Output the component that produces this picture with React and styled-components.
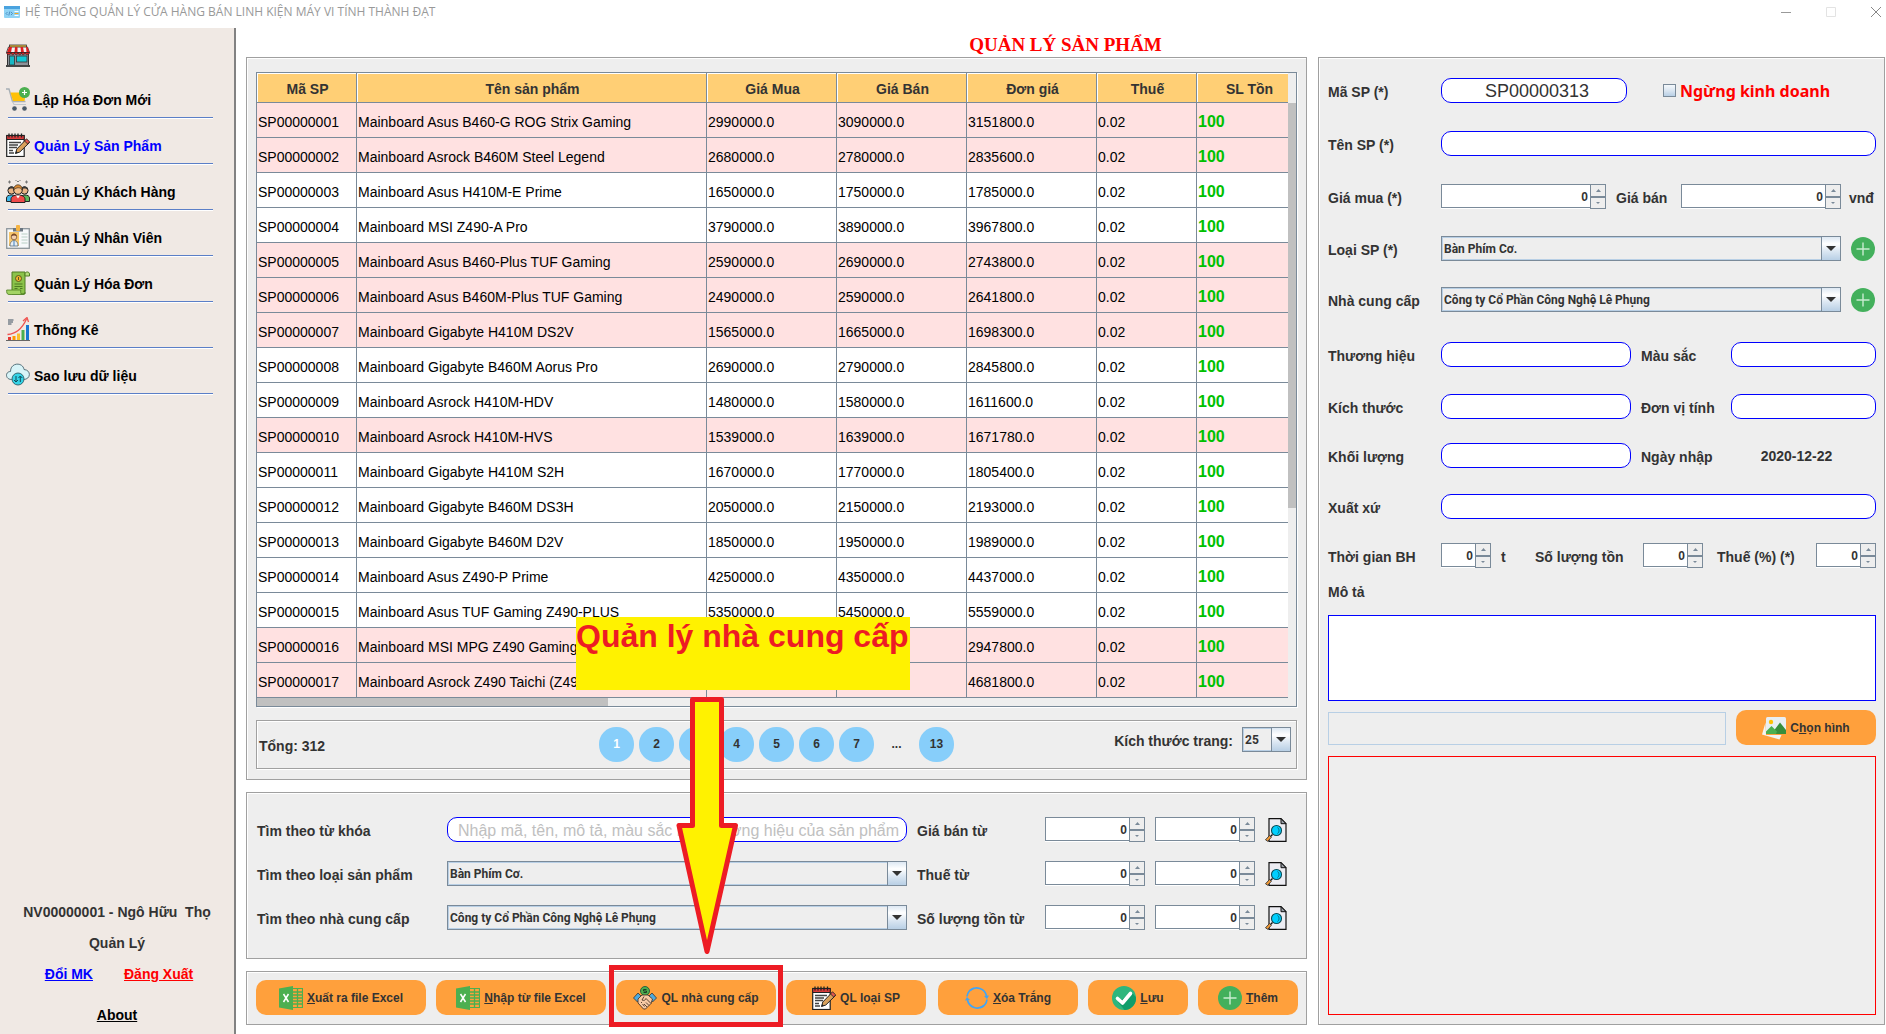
import React from "react";
import styled, { createGlobalStyle, css } from "styled-components";

const sans = '"Liberation Sans", Arial, sans-serif';
const ink = "#333333";
const steel = "#7a8a99";
const frost = "#b8cfe5";
const surface = "#eeeeee";

const GlobalStyle = createGlobalStyle`
  *, *::before, *::after { box-sizing: border-box; }
  body { margin: 0; background: #fff; color: ${ink}; font: 14px/18px ${sans}; }
  button, input, select, textarea { font: inherit; color: inherit; margin: 0; }
  button { cursor: pointer; }
`;

/* ---------- window ---------- */

const Window = styled.div`
  display: flex;
  flex-direction: column;
  min-height: 100vh;
`;

const TitleBar = styled.header`
  display: flex;
  align-items: center;
  gap: 5px;
  height: 28px;
  padding: 0 2px 4px 4px;
  color: #999;
  font: 12px/16px "Open Sans", "Noto Sans", sans-serif;
`;

const WindowControls = styled.div`
  display: flex;
  gap: 29px;
  margin-left: auto;
`;

const ControlButton = styled.button`
  display: flex;
  width: 16px;
  padding: 2px;
  border: 0;
  background: none;
`;

const Body = styled.div`
  display: grid;
  grid-template-columns: 236px minmax(0, 1fr);
  flex: 1;
`;

/* ---------- sidebar ---------- */

const Sidebar = styled.aside`
  display: flex;
  flex-direction: column;
  padding: 16px 0 10px;
  background: #f0e9e4;
  border-right: 2px solid #828282;
  font-weight: bold;
`;

const HomeLink = styled.a`
  display: flex;
  padding: 0 6px 4px;
`;

const NavList = styled.ul`
  margin: 0;
  padding: 0;
  list-style: none;
`;

const NavItem = styled.li`
  &::after {
    content: "";
    display: block;
    height: 1px;
    margin: 0 21px 0 8px;
    background: #5b7fc7;
    box-shadow: 0 1px 0 #fff;
  }
`;

const NavLink = styled.a`
  display: flex;
  align-items: center;
  gap: 4px;
  padding: 15px 0 6px 6px;
  color: ${(p) => (p.$active ? "#0000ff" : "#000")};
  text-decoration: none;
  span { padding-top: 2px; }
`;

const Account = styled.div`
  display: flex;
  flex-direction: column;
  align-items: center;
  gap: 13px;
  margin-top: auto;
  p { margin: 0; white-space: pre; }
`;

const AccountLinks = styled.div`
  display: flex;
  gap: 31px;
  padding: 0 0 10px 4px;
`;

const TextLink = styled.a`
  color: ${(p) => p.$color};
  text-decoration: underline;
`;

/* ---------- shared parts ---------- */

const Panel = styled.section`
  background: ${surface};
  border: 1px solid #a0a0a0;
  box-shadow: inset 1px 1px 0 #fff, 1px 1px 0 #fff;
`;

const Label = styled.label`
  padding-top: 2px;
  font-weight: bold;
  white-space: nowrap;
`;

const RoundInput = styled.input`
  width: 100%;
  min-width: 0;
  height: 25px;
  padding: 2px 4px 0 10px;
  border: 1px solid #0000ff;
  border-radius: 10px;
  background: #fff;
  font-size: 16px;
  outline: 0;
  text-align: ${(p) => (p.$center ? "center" : "left")};
  ${(p) => p.$center && css`font-size: 18px;`}
  &::placeholder { color: #c0c0c0; opacity: 1; }
`;

const SpinBox = styled.div`
  display: grid;
  grid-template-columns: minmax(0, 1fr) 16px;
  height: 25px;
  min-width: 0;
`;

const SpinInput = styled.input`
  min-width: 0;
  height: 24px;
  padding: 1px 2px 0;
  border: 1px solid ${steel};
  border-right: 0;
  background: #fff;
  box-shadow: 0 1px 0 #fff;
  border-radius: 0;
  font-size: 12px;
  font-weight: bold;
  text-align: right;
  outline: 0;
`;

const SpinArrows = styled.div`
  display: grid;
  grid-template-rows: 1fr 1fr;
`;

const SpinArrow = styled.button`
  display: flex;
  align-items: center;
  justify-content: center;
  padding: 0;
  border: 1px solid ${steel};
  background: ${surface};
`;

const SelectBox = styled.div`
  position: relative;
  display: flex;
  min-width: 0;
`;

const Select = styled.select`
  appearance: none;
  width: 100%;
  height: 25px;
  padding: 0 24px 0 2px;
  border: 1px solid ${steel};
  border-radius: 0;
  box-shadow: inset 0 0 0 1px ${frost};
  background: ${surface};
  font: bold 12px/18px Roboto, ${sans};
  outline: 0;
`;

const SelectArrow = styled.span`
  position: absolute;
  top: 0;
  right: 0;
  display: flex;
  align-items: center;
  justify-content: center;
  width: 20px;
  height: 25px;
  border: 1px solid ${steel};
  background: linear-gradient(#dde8f3, #ffffff 30%, #dde8f3 60%, #b8cfe5);
  pointer-events: none;
`;

const IconButton = styled.button`
  display: flex;
  padding: 0;
  border: 0;
  background: none;
`;

const ActionButton = styled.button`
  display: flex;
  align-items: center;
  justify-content: center;
  gap: 4px;
  width: ${(p) => p.$width}px;
  height: 35px;
  padding: 0;
  margin-left: ${(p) => (p.$push ? "auto" : 0)};
  border: 0;
  border-radius: 10px;
  background: #ffa03c;
  font-size: 12px;
  font-weight: bold;
  white-space: nowrap;
`;

function Spinner({ id, label }) {
  const [value, setValue] = React.useState(0);
  return (
    <SpinBox>
      <SpinInput id={id} aria-label={label} inputMode="numeric" value={value}
        onChange={(e) => setValue(Number(e.target.value) || 0)} />
      <SpinArrows>
        <SpinArrow type="button" aria-label="Tăng" onClick={() => setValue(value + 1)}>
          <svg width="5" height="3"><path d="M0 3 2.500 0 5 3z" fill={steel} /></svg>
        </SpinArrow>
        <SpinArrow type="button" aria-label="Giảm" onClick={() => setValue(value - 1)}>
          <svg width="4" height="2"><path d="M0 0H4L2 2z" fill={steel} /></svg>
        </SpinArrow>
      </SpinArrows>
    </SpinBox>
  );
}

function Combo({ id, value }) {
  return (
    <SelectBox>
      <Select id={id} defaultValue={value}><option>{value}</option></Select>
      <SelectArrow>
        <svg width="10" height="5"><path d="M0 0H10L5 5z" fill="#333" /></svg>
      </SelectArrow>
    </SelectBox>
  );
}

/* ---------- icons ---------- */

const Icon = ({ children, w = 24, h = 24, box = "0 0 24 24" }) => (
  <svg width={w} height={h} viewBox={box} aria-hidden="true">{children}</svg>
);

const AppIcon = () => (
  <Icon w={16} h={12} box="0 0 16 12">
    <rect width="16" height="12" rx="1" fill="#8fd3f5" />
    <rect width="16" height="3" fill="#4aa3df" />
    <path d="M3.500 6 2 7.500 3.500 9M7 6l1.500 1.500L7 9M5.800 5.500 4.800 9.500" stroke="#3c7fb5" fill="none" strokeWidth=".8" />
    <path d="M10.500 5.500h4M10.500 9.500h4" stroke="#fff" />
    <path d="M10.500 7.500h4" stroke="#f5a623" />
  </Icon>
);

const StoreIcon = () => (
  <Icon>
    <rect x="1.500" y="8" width="21" height="13.500" fill="#8d9299" stroke="#333" />
    <rect x="3.500" y="1" width="17" height="3" fill="#f6c644" stroke="#333" strokeWidth=".8" />
    <path d="M2.500 3h19l2 5.500H.5z" fill="#f2f2f2" stroke="#222" strokeWidth=".8" />
    <path d="M3 3h3L5 8.500H1zM9 3h2.500v5.500H8.500zM14.500 3H17l1 5.500h-3zM20 3h1.500l2 5.500h-3z" fill="#e02020" />
    <path d="M.5 8.500c0 3 4.500 3 4.500 0 0 3 3.600 3 3.600 0 0 3 3.400 3 3.400 0 0 3 3.400 3 3.400 0 0 3 3.600 3 3.600 0 0 3 4.500 3 4.500 0z" fill="#d42525" stroke="#222" strokeWidth=".6" />
    <rect x="3.500" y="12" width="5" height="9" fill="#17b8c4" stroke="#333" strokeWidth=".8" />
    <rect x="10.500" y="12" width="10.500" height="6" fill="#12c7d4" stroke="#333" strokeWidth=".8" />
    <path d="M0 22h24" stroke="#444" strokeWidth="2" />
  </Icon>
);

const CartIcon = () => (
  <Icon>
    <path d="M0 2h3l3.500 12.500h13" fill="none" stroke="#a7afb5" strokeWidth="1.400" />
    <path d="M4.500 5.500H20l-1.500 8.500H7z" fill="#ffc107" />
    <path d="M6.500 14.500 8 17.500h12" fill="none" stroke="#c3c8cc" strokeWidth="1.200" />
    <circle cx="8.500" cy="21.500" r="2.300" fill="#4b5a67" />
    <circle cx="18.500" cy="21.500" r="2.300" fill="#4b5a67" />
    <circle cx="18.500" cy="5.500" r="5.500" fill="#4caf50" />
    <path d="M18.500 3v5M16 5.500h5" stroke="#fff" strokeWidth="1.200" />
  </Icon>
);

const NoteIcon = () => (
  <Icon>
    <rect x=".7" y="2.500" width="17.500" height="21" fill="#fff" stroke="#222" strokeWidth="1.200" />
    <path d="M.7 2.500h17.500V6.500H.7z" fill="#d83a3a" stroke="#222" />
    <path d="M3 .500v4M6 .500v4M9 .500v4M12 .500v4M15.500 .500v4" stroke="#222" strokeWidth="1.300" />
    <path d="M3 9.500h12M3 12h9M3 14.500h8M3 17.500h4M3 20h5" stroke="#444" strokeWidth="1.300" />
    <path d="M9.500 20.500 10.800 16 20 6.500l3.500 3L13.800 19z" fill="#d9a15c" stroke="#222" />
    <path d="M18.500 8 20.500 5.800l3.200 3-2 2.200z" fill="#e2574c" stroke="#222" strokeWidth=".8" />
    <path d="m9.500 20.500.7-2.500 1.800 1.800z" fill="#222" />
  </Icon>
);

const PeopleIcon = () => (
  <Icon>
    <path d="M3.500 1.500v3M2 3h3M20.500 1.500v3M19 3h3M9.500 1.500h1M13.500 1.500h1M11 2.500h2" stroke="#777" />
    <path d="M.5 22.500v-3.500c0-2 2-3 5-3s4 1 4 3v3.500z" fill="#3fb7e8" stroke="#222" />
    <path d="M14.500 22.500V19c0-2 2-3 4.500-3s4.500 1 4.500 3v3.500z" fill="#5cb85c" stroke="#222" />
    <circle cx="5.500" cy="11.500" r="3.600" fill="#e9b384" stroke="#222" />
    <path d="M1.900 11c0-5 7.200-5 7.200 0-2-2-5-2-7.200 0z" fill="#3a3a3a" />
    <circle cx="18.500" cy="11.500" r="3.600" fill="#e9b384" stroke="#222" />
    <path d="M14.900 11c0-5 7.200-5 7.200 0-2-2-5-2-7.200 0z" fill="#3a3a3a" />
    <path d="M5 23.500V20c0-2.500 3-4 7-4s7 1.500 7 4v3.500z" fill="#ef4a4a" stroke="#222" />
    <circle cx="12" cy="11" r="4.300" fill="#f3bf8c" stroke="#222" />
    <path d="M7.600 11c0-7 8.800-7 8.800 0-2-3-6-3-8.800 0z" fill="#d98a35" stroke="#222" strokeWidth=".6" />
    <path d="m10 16.500 2 3 2-3z" fill="#fff" />
  </Icon>
);

const BadgeIcon = () => (
  <Icon>
    <rect x=".7" y="3.700" width="22.600" height="19.600" fill="#f7f9fa" stroke="#8d959b" strokeWidth="1.300" />
    <path d="M7 3h10v3.500H7z" fill="#6b7680" />
    <rect x="10" width="4" height="6" rx="1" fill="#f5b342" />
    <rect x="3" y="7" width="10" height="14" fill="#f7c56a" />
    <path d="M4 21c0-4 2-5.500 4-5.500s4 1.500 4 5.500z" fill="#e8eef2" stroke="#5b6a75" strokeWidth=".8" />
    <circle cx="8" cy="12" r="2.800" fill="#f3cfae" stroke="#6b4a33" strokeWidth=".7" />
    <path d="M5.200 11.500c0-4 5.600-4 5.600 0-1.500-1.500-4-1.500-5.600 0z" fill="#7a4a2b" />
    <path d="M8 16v5" stroke="#3f7fbf" />
    <path d="M15.500 9h6M15.500 12h6M15.500 15h6M15.500 18h6" stroke="#b9cfc4" strokeWidth="1.200" />
  </Icon>
);

const InvoiceIcon = () => (
  <Icon>
    <path d="M6 1h13v22H6z" fill="#8bc34a" stroke="#4e7d22" />
    <path d="M19 5V3c0-2.700 4.500-2.700 4.500 0v2z" fill="#b5dd7c" stroke="#4e7d22" />
    <path d="M.7 19h14v2.500c0 2.500 4 2.500 4.300 0-.3 1.500-1 2-2.500 2H3C.7 23.500.5 21 .7 19z" fill="#a4d465" stroke="#4e7d22" strokeWidth=".8" />
    <circle cx="12.500" cy="7.500" r="3" fill="#f2b430" stroke="#5a5a1e" />
    <path d="M12.500 6v3" stroke="#5a5a1e" />
    <path d="M8.500 13h8M8.500 15.500h8M8.500 17.500h3M14 17.500h2.500" stroke="#4e7d22" strokeWidth="1.200" />
  </Icon>
);

const ChartIcon = () => (
  <Icon>
    <path d="M0 23.500h24" stroke="#666" strokeWidth="1" />
    <path d="M2 20h3v3H2z" fill="#e53935" />
    <path d="M6.500 19h3v4h-3z" fill="#ff9800" />
    <path d="M11 16.500h3V23h-3z" fill="#fbc02d" />
    <path d="M15.500 13h3v10h-3z" fill="#4caf50" />
    <path d="M20 8h3v15h-3z" fill="#1976d2" />
    <path d="M1.500 17.500C9 17 16 12 20.500 2" fill="none" stroke="#ef5350" strokeWidth="1.300" />
    <path d="m17 4 4-3.500L22.500 5" fill="none" stroke="#ef5350" strokeWidth="1.300" />
    <path d="M2 3h5.500M2 5h5M2 7h3.500" stroke="#78838c" strokeWidth="1.500" />
  </Icon>
);

const CloudIcon = () => (
  <Icon>
    <path d="M5.500 16.500C-1 16.500-1 8.500 4.500 8.500 4.500-1 17-1 18 6.500c7.500.500 7 10-.500 10z" fill="#d8f4f8" stroke="#4c6670" strokeWidth=".9" />
    <circle cx="12" cy="16" r="6" fill="#35d3e6" stroke="#2c5c68" strokeWidth=".9" />
    <path d="M10 13v5.500M8 17l2 2 2-2M14.300 19v-5.500M12.500 15l1.800-2 2 2" fill="none" stroke="#0f4c5c" />
  </Icon>
);

const ExcelIcon = () => (
  <Icon>
    <path d="M13 2.500h10.500v19H13z" fill="#ffa03c" stroke="#4caf50" strokeWidth="1.200" />
    <path d="M14 6h9.500M14 9h9.500M14 12h9.500M14 15h9.500M14 18h9.500M18.500 2.500v19" stroke="#4caf50" strokeWidth="1.300" />
    <path d="M0 2.500 14 0v24L0 21.500z" fill="#4caf50" />
    <path d="m4.500 8 5 8M9.500 8l-5 8" stroke="#fff" strokeWidth="1.500" />
  </Icon>
);

const DealIcon = () => (
  <Icon>
    <circle cx="12" cy="5" r="4.500" fill="#4caf50" stroke="#2f5f3a" />
    <path d="M13.500 3.500h-3v1.500h3v1.500h-3" fill="none" stroke="#1d3d25" />
    <path d="m.5 12 4.500-5 4 4-4.500 5z" fill="#4fa9dc" stroke="#333" strokeWidth=".8" />
    <path d="m23.500 12-4.500-5-4 4 4.500 5z" fill="#4fa9dc" stroke="#333" strokeWidth=".8" />
    <path d="m5 13 4-4h6l4.500 4-1.500 4.500-5.500 5.500h-2L5 17z" fill="#f6c9a4" stroke="#4a3528" strokeWidth=".9" />
    <path d="m11 10.500-2 3.500c2 1 3.500 0 4-1.500l5 5M9.500 18l2 2.500M8 16l1 1M13 16.500l3 3M11 18l3 3" fill="none" stroke="#4a3528" strokeWidth=".9" />
  </Icon>
);

const RefreshIcon = () => (
  <Icon>
    <g fill="none" stroke="#42a5f5" strokeWidth="1.700">
      <path d="M5 4.500A10 10 0 0 1 21.500 10" />
      <path d="M22 13.500A10 10 0 0 1 15 21.800" />
      <path d="M19 19.500A10 10 0 0 1 2.500 14" />
      <path d="M2 10.500A10 10 0 0 1 9 2.300" />
    </g>
    <path d="m19 10 3 3 2-3.500zM5 14l-3-3-2 3.500z" fill="#42a5f5" />
  </Icon>
);

const CheckIcon = () => (
  <Icon>
    <circle cx="12" cy="12" r="12" fill="#2eb67d" />
    <path d="M20 6.500 24 11.500C24.500 18 19 24 12.500 24L6 16z" fill="#0f9d6a" />
    <path d="m5.500 12.500 5 4.500L18.500 7.500" fill="none" stroke="#fff" strokeWidth="3.600" strokeLinecap="round" strokeLinejoin="round" />
  </Icon>
);

const PlusIcon = () => (
  <Icon>
    <circle cx="12" cy="12" r="12" fill="#43b05c" />
    <path d="M12 5.500v13M5.500 12h13" stroke="#c9ecd0" strokeWidth="1.400" />
  </Icon>
);

const PhotoIcon = () => (
  <Icon>
    <path d="M3.500 6.500 0 18.500l17.500 5 2-4.500H4z" fill="#f3f3f3" />
    <rect x="4" y="1" width="20" height="17" rx="1.500" fill="#e8eef2" />
    <path d="M12 18v-3.500l6-8 6 7.500v4z" fill="#388e3c" />
    <path d="M4 15.500 9.500 10l5.500 5.500-1 2.500H4z" fill="#4caf50" />
    <circle cx="9" cy="6" r="2.200" fill="#ffc107" />
  </Icon>
);

const FindIcon = () => (
  <Icon w={22} h={24} box="0 0 22 24">
    <path d="M4 .700h12l5 5V23.300H4z" fill="#ececf2" stroke="#111" strokeWidth="1.200" />
    <path d="M16 .700v5h5z" fill="#9aa0a8" stroke="#111" />
    <circle cx="11.500" cy="12.500" r="5" fill="#00cfff" stroke="#0a4a55" strokeWidth="1.100" />
    <path d="M12.500 9.500c2 1.500 2 4.500 0 6" fill="none" stroke="#0a6a80" />
    <path d="M7.500 16.500 5.500 18.500" stroke="#111" strokeWidth="1.500" />
    <path d="m4.500 17.500 1.800 1.800-3.500 4-2.300-1.500z" fill="#f29b38" stroke="#333" strokeWidth=".9" />
  </Icon>
);

/* ---------- main ---------- */

const Main = styled.main`
  padding: 0 1px 9px 10px;
`;

const PageTitle = styled.h1`
  margin: 0;
  padding: 5px 0 0;
  color: #ff0000;
  font: bold 19px/24px "Liberation Serif", "Times New Roman", serif;
  text-align: center;
`;

const Workspace = styled.div`
  display: grid;
  grid-template-columns: minmax(0, 1fr) 567px;
  gap: 11px;
`;

const Column = styled.div`
  display: flex;
  flex-direction: column;
  gap: 12px;
  min-width: 0;
`;

const ListPanel = styled(Panel)`
  display: flex;
  flex-direction: column;
  gap: 13px;
  padding: 14px 9px 10px;
`;

const TableFrame = styled.div`
  display: grid;
  grid-template-columns: minmax(0, 1fr) 8px;
  grid-template-rows: auto 8px;
  border: 1px solid ${steel};
  box-shadow: 1px 1px 0 #fff;
`;

const TableViewport = styled.div`
  overflow: hidden;
`;

const Table = styled.table`
  width: 100%;
  min-width: 1034px;
  table-layout: fixed;
  border-collapse: separate;
  border-spacing: 0;
  color: #000;
`;

const HeadCell = styled.th`
  width: ${(p) => p.$width}px;
  height: 30px;
  padding: 2px 0 0 2px;
  border-right: 1px solid ${steel};
  border-bottom: 1px solid ${steel};
  box-shadow: inset 1px 1px 0 #fff;
  background: #ffcf75;
  color: ${ink};
`;

const Row = styled.tr`
  background: ${(p) => (p.$flagged ? "#ffe1e1" : "#ffffff")};
`;

const Cell = styled.td`
  height: 35px;
  padding: 3px 1px 0;
  border-right: 1px solid ${steel};
  border-bottom: 1px solid ${steel};
  white-space: nowrap;
  overflow: hidden;
`;

const StockCell = styled(Cell)`
  color: #00c000;
  font-size: 16px;
  font-weight: bold;
`;

const ScrollTrack = styled.div`
  padding-top: ${(p) => (p.$vertical ? 30 : 0)}px;
`;

const VerticalThumb = styled.div`
  height: 68%;
  background: #c0c0c0;
`;

const HorizontalThumb = styled.div`
  width: 34%;
  height: 8px;
  background: #c0c0c0;
`;

const Pager = styled(Panel)`
  display: grid;
  grid-template-columns: 1fr auto 1fr;
  padding: 6px 0;
  font-weight: bold;
`;

const Total = styled.span`
  align-self: center;
  padding: 3px 0 0 2px;
`;

const PageList = styled.nav`
  display: flex;
  gap: 5px;
`;

const pageItem = css`
  width: 35px;
  height: 35px;
  padding: 0;
  font-size: 12px;
  font-weight: bold;
  line-height: 35px;
  text-align: center;
`;

const PageButton = styled.button`
  ${pageItem}
  border: 0;
  border-radius: 17px;
  background: #87cefa;
  color: ${(p) => (p.$current ? "#fff" : ink)};
`;

const PageDots = styled.span`
  ${pageItem}
`;

const PageSize = styled.div`
  display: grid;
  grid-template-columns: auto 49px;
  align-items: center;
  align-self: start;
  justify-self: end;
  gap: 9px;
  padding-right: 5px;
`;

const SearchPanel = styled(Panel)`
  display: grid;
  gap: 19px;
  padding: 24px 19px 28px 10px;
`;

const SearchRow = styled.div`
  display: grid;
  grid-template-columns: 190px minmax(0, 1fr) 118px 100px 100px 22px;
  column-gap: 10px;
  align-items: center;
  > :first-child { margin-right: -10px; }
  > :nth-child(2) { width: auto; margin-left: -10px; }
`;

const ActionPanel = styled(Panel)`
  display: flex;
  gap: 10px;
  padding: 8px 8px 9px 9px;
`;

/* ---------- callout drawn over the page ---------- */

const CalloutAnchor = styled.div`
  position: relative;
`;

const CalloutFrame = styled.div`
  position: absolute;
  inset: -15px -7px -12px;
  z-index: 1;
  border: 5px solid #ed1c24;
  pointer-events: none;
`;

const CalloutArrow = styled.svg`
  position: absolute;
  bottom: 61px;
  left: 60px;
  z-index: 3;
  pointer-events: none;
`;

const CalloutText = styled.div`
  position: absolute;
  bottom: 325px;
  left: -40px;
  z-index: 2;
  width: 334px;
  height: 73px;
  background: #fff200;
  color: #ed1c24;
  font-size: 32px;
  font-weight: bold;
  line-height: 38px;
  white-space: nowrap;
`;

/* ---------- product form ---------- */

const ProductForm = styled(Panel).attrs({ as: "form" })`
  display: flex;
  flex-direction: column;
  padding: 20px 8px 9px 9px;
`;

const FormRow = styled.div`
  display: grid;
  grid-template-columns: 113px ${(p) => p.$columns};
  align-items: center;
  min-height: 25px;
  margin-top: ${(p) => p.$before || 0}px;
`;

const Inset = styled(Label)`
  padding-left: ${(p) => p.$indent || 10}px;
`;

const CheckLabel = styled.label`
  display: flex;
  align-items: center;
  gap: 4px;
  padding-left: 36px;
  color: #ff0000;
  font: bold 16px/22px "Noto Sans", ${sans};
`;

const CheckBox = styled.input`
  appearance: none;
  width: 13px;
  height: 13px;
  border: 1px solid ${steel};
  background: linear-gradient(#f4f8fb, #dbe6f1 50%, #b8cfe5);
`;

const EntryDate = styled.output`
  padding-right: 14px;
  font-weight: bold;
  text-align: center;
`;

const DescriptionLabel = styled(Label)`
  margin: 13px 0 14px;
`;

const Description = styled.textarea`
  display: block;
  width: 100%;
  height: 86px;
  border: 1px solid #0000ff;
  background: #fff;
  resize: none;
  outline: 0;
`;

const PictureRow = styled.div`
  display: grid;
  grid-template-columns: minmax(0, 1fr) 140px;
  align-items: end;
  gap: 10px;
  margin: 9px 0 11px;
`;

const PicturePath = styled.input`
  min-width: 0;
  height: 33px;
  border: 1px solid ${frost};
  background: ${surface};
`;

const Preview = styled.div`
  flex: 1;
  min-height: 200px;
  border: 1px solid #ff0000;
`;

/* ---------- data ---------- */

const navItems = [
  ["Lập Hóa Đơn Mới", CartIcon],
  ["Quản Lý Sản Phẩm", NoteIcon],
  ["Quản Lý Khách Hàng", PeopleIcon],
  ["Quản Lý Nhân Viên", BadgeIcon],
  ["Quản Lý Hóa Đơn", InvoiceIcon],
  ["Thống Kê", ChartIcon],
  ["Sao lưu dữ liệu", CloudIcon],
];

const headers = [
  ["Mã SP", 100], ["Tên sản phẩm", 350], ["Giá Mua", 130], ["Giá Bán", 130],
  ["Đơn giá", 130], ["Thuế", 100], ["SL Tồn", 104],
];

const products = [
  ["Mainboard Asus B460-G ROG Strix Gaming", "2990000.0", "3090000.0", "3151800.0", true],
  ["Mainboard Asrock B460M Steel Legend", "2680000.0", "2780000.0", "2835600.0", true],
  ["Mainboard Asus H410M-E Prime", "1650000.0", "1750000.0", "1785000.0", false],
  ["Mainboard MSI Z490-A Pro", "3790000.0", "3890000.0", "3967800.0", false],
  ["Mainboard Asus B460-Plus TUF Gaming", "2590000.0", "2690000.0", "2743800.0", true],
  ["Mainboard Asus B460M-Plus TUF Gaming", "2490000.0", "2590000.0", "2641800.0", true],
  ["Mainboard Gigabyte H410M DS2V", "1565000.0", "1665000.0", "1698300.0", true],
  ["Mainboard Gigabyte B460M Aorus Pro", "2690000.0", "2790000.0", "2845800.0", false],
  ["Mainboard Asrock H410M-HDV", "1480000.0", "1580000.0", "1611600.0", false],
  ["Mainboard Asrock H410M-HVS", "1539000.0", "1639000.0", "1671780.0", true],
  ["Mainboard Gigabyte H410M S2H", "1670000.0", "1770000.0", "1805400.0", false],
  ["Mainboard Gigabyte B460M DS3H", "2050000.0", "2150000.0", "2193000.0", false],
  ["Mainboard Gigabyte B460M D2V", "1850000.0", "1950000.0", "1989000.0", false],
  ["Mainboard Asus Z490-P Prime", "4250000.0", "4350000.0", "4437000.0", false],
  ["Mainboard Asus TUF Gaming Z490-PLUS", "5350000.0", "5450000.0", "5559000.0", false],
  ["Mainboard MSI MPG Z490 Gaming", "", "", "2947800.0", true],
  ["Mainboard Asrock Z490 Taichi (Z490)", "", "", "4681800.0", true],
];

const category = "Bàn Phím Cơ.";
const supplier = "Công ty Cổ Phần Công Nghệ Lê Phụng";

function ProductTable() {
  return (
    <TableFrame>
      <TableViewport>
        <Table>
          <thead>
            <tr>{headers.map(([name, width]) => <HeadCell key={name} $width={width}>{name}</HeadCell>)}</tr>
          </thead>
          <tbody>
            {products.map(([name, buy, sell, unit, flagged], i) => (
              <Row key={name} $flagged={flagged}>
                <Cell>{"SP" + String(i + 1).padStart(8, "0")}</Cell>
                <Cell>{name}</Cell>
                <Cell>{buy}</Cell>
                <Cell>{sell}</Cell>
                <Cell>{unit}</Cell>
                <Cell>0.02</Cell>
                <StockCell>100</StockCell>
              </Row>
            ))}
          </tbody>
        </Table>
      </TableViewport>
      <ScrollTrack $vertical><VerticalThumb /></ScrollTrack>
      <ScrollTrack><HorizontalThumb /></ScrollTrack>
    </TableFrame>
  );
}

function SearchLine({ id, label, range, children }) {
  return (
    <SearchRow>
      <Label htmlFor={id}>{label}</Label>
      {children}
      <Label htmlFor={id + "-from"}>{range}</Label>
      <Spinner id={id + "-from"} />
      <Spinner label={range + " - đến"} />
      <IconButton type="button" aria-label={"Tìm " + range}><FindIcon /></IconButton>
    </SearchRow>
  );
}

export default function App() {
  return (
    <Window>
      <GlobalStyle />
      <TitleBar>
        <AppIcon />
        <span>HỆ THỐNG QUẢN LÝ CỬA HÀNG BÁN LINH KIỆN MÁY VI TÍNH THÀNH ĐẠT</span>
        <WindowControls>
          <ControlButton aria-label="Thu nhỏ"><Icon w={12} h={12} box="0 0 12 12"><path d="M1 6.500h10" stroke="#999" /></Icon></ControlButton>
          <ControlButton aria-label="Phóng to"><Icon w={12} h={12} box="0 0 12 12"><path d="M1.500 1.500h9v9h-9z" fill="none" stroke="#e3e3e3" /></Icon></ControlButton>
          <ControlButton aria-label="Đóng"><Icon w={12} h={12} box="0 0 12 12"><path d="m1 1 10 10M11 1 1 11" stroke="#888" /></Icon></ControlButton>
        </WindowControls>
      </TitleBar>
      <Body>
        <Sidebar>
          <HomeLink href="#home" aria-label="Trang chủ"><StoreIcon /></HomeLink>
          <NavList>
            {navItems.map(([name, Glyph], i) => (
              <NavItem key={name}>
                <NavLink href={"#" + i} $active={i === 1}><Glyph /><span>{name}</span></NavLink>
              </NavItem>
            ))}
          </NavList>
          <Account>
            <p>{"NV00000001 - Ngô Hữu  Thọ"}</p>
            <p>Quản Lý</p>
            <AccountLinks>
              <TextLink href="#password" $color="#0000ff">Đổi MK</TextLink>
              <TextLink href="#logout" $color="#ff0000">Đăng Xuất</TextLink>
            </AccountLinks>
            <TextLink href="#about" $color="#000">About</TextLink>
          </Account>
        </Sidebar>

        <Main>
          <PageTitle>QUẢN LÝ SẢN PHẨM</PageTitle>
          <Workspace>
            <Column>
              <ListPanel>
                <ProductTable />
                <Pager>
                  <Total>Tổng: 312</Total>
                  <PageList aria-label="Trang">
                    {[1, 2, 3, 4, 5, 6, 7].map((n) => <PageButton key={n} $current={n === 1}>{n}</PageButton>)}
                    <PageDots>...</PageDots>
                    <PageButton>13</PageButton>
                  </PageList>
                  <PageSize>
                    <Label htmlFor="page-size">Kích thước trang:</Label>
                    <Combo id="page-size" value="25" />
                  </PageSize>
                </Pager>
              </ListPanel>

              <SearchPanel>
                <SearchLine id="keyword" label="Tìm theo từ khóa" range="Giá bán từ">
                  <RoundInput id="keyword" placeholder="Nhập mã, tên, mô tả, màu sắc hay thương hiệu của sản phẩm" />
                </SearchLine>
                <SearchLine id="by-type" label="Tìm theo loại sản phẩm" range="Thuế từ">
                  <Combo id="by-type" value={category} />
                </SearchLine>
                <SearchLine id="by-supplier" label="Tìm theo nhà cung cấp" range="Số lượng tồn từ">
                  <Combo id="by-supplier" value={supplier} />
                </SearchLine>
              </SearchPanel>

              <ActionPanel>
                <ActionButton $width={170}><ExcelIcon /><span><u>X</u>uất ra file Excel</span></ActionButton>
                <ActionButton $width={170}><ExcelIcon /><span><u>N</u>hập từ file Excel</span></ActionButton>
                <CalloutAnchor>
                  <ActionButton $width={160}><DealIcon /><span>QL nhà cung cấp</span></ActionButton>
                  <CalloutFrame />
                  <CalloutText>Quản lý nhà cung cấp</CalloutText>
                  <CalloutArrow width="63" height="257" viewBox="0 0 63 257">
                    <path d="M16.500 2.500h29v126h14L31 254.500 3 128.500h13.500z" fill="#fff200" stroke="#ed1c24" strokeWidth="5" strokeLinejoin="round" />
                  </CalloutArrow>
                </CalloutAnchor>
                <ActionButton $width={140}><NoteIcon /><span>QL loại SP</span></ActionButton>
                <ActionButton $width={140} $push><RefreshIcon /><span><u>X</u>óa Trắng</span></ActionButton>
                <ActionButton $width={100}><CheckIcon /><span><u>L</u>ưu</span></ActionButton>
                <ActionButton $width={100}><PlusIcon /><span><u>T</u>hêm</span></ActionButton>
              </ActionPanel>
            </Column>

            <ProductForm>
              <FormRow $columns="186px 1fr">
                <Label htmlFor="code">Mã SP (*)</Label>
                <RoundInput id="code" $center defaultValue="SP00000313" />
                <CheckLabel><CheckBox type="checkbox" />Ngừng kinh doanh</CheckLabel>
              </FormRow>
              <FormRow $before={28} $columns="1fr">
                <Label htmlFor="name">Tên SP (*)</Label>
                <RoundInput id="name" />
              </FormRow>
              <FormRow $before={28} $columns="165px 75px 160px 1fr">
                <Label htmlFor="buy">Giá mua (*)</Label>
                <Spinner id="buy" />
                <Inset htmlFor="sell">Giá bán</Inset>
                <Spinner id="sell" />
                <Inset as="span" $indent={8}>vnđ</Inset>
              </FormRow>
              <FormRow $before={27} $columns="minmax(0, 1fr) 10px 25px">
                <Label htmlFor="type">Loại SP (*)</Label>
                <Combo id="type" value={category} />
                <span />
                <IconButton type="button" aria-label="Thêm loại"><PlusIcon /></IconButton>
              </FormRow>
              <FormRow $before={26} $columns="minmax(0, 1fr) 10px 25px">
                <Label htmlFor="supplier">Nhà cung cấp</Label>
                <Combo id="supplier" value={supplier} />
                <span />
                <IconButton type="button" aria-label="Thêm nhà cung cấp"><PlusIcon /></IconButton>
              </FormRow>
              <FormRow $before={30} $columns="190px 100px 1fr">
                <Label htmlFor="brand">Thương hiệu</Label>
                <RoundInput id="brand" />
                <Inset htmlFor="color">Màu sắc</Inset>
                <RoundInput id="color" />
              </FormRow>
              <FormRow $before={27} $columns="190px 100px 1fr">
                <Label htmlFor="size">Kích thước</Label>
                <RoundInput id="size" />
                <Inset htmlFor="unit">Đơn vị tính</Inset>
                <RoundInput id="unit" />
              </FormRow>
              <FormRow $before={24} $columns="190px 100px 1fr">
                <Label htmlFor="weight">Khối lượng</Label>
                <RoundInput id="weight" />
                <Inset htmlFor="entry">Ngày nhập</Inset>
                <EntryDate id="entry">2020-12-22</EntryDate>
              </FormRow>
              <FormRow $before={26} $columns="1fr">
                <Label htmlFor="origin">Xuất xứ</Label>
                <RoundInput id="origin" />
              </FormRow>
              <FormRow $before={24} $columns="50px 34px 118px 60px 1fr 60px">
                <Label htmlFor="warranty">Thời gian BH</Label>
                <Spinner id="warranty" />
                <Inset as="span">t</Inset>
                <Inset htmlFor="stock">Số lượng tồn</Inset>
                <Spinner id="stock" />
                <Inset htmlFor="tax" $indent={14}>Thuế (%) (*)</Inset>
                <Spinner id="tax" />
              </FormRow>
              <DescriptionLabel htmlFor="description">Mô tả</DescriptionLabel>
              <Description id="description" />
              <PictureRow>
                <PicturePath aria-label="Đường dẫn hình" readOnly />
                <ActionButton type="button" $width={140}><PhotoIcon /><span>C<u>h</u>ọn hình</span></ActionButton>
              </PictureRow>
              <Preview />
            </ProductForm>
          </Workspace>
        </Main>
      </Body>
    </Window>
  );
}
